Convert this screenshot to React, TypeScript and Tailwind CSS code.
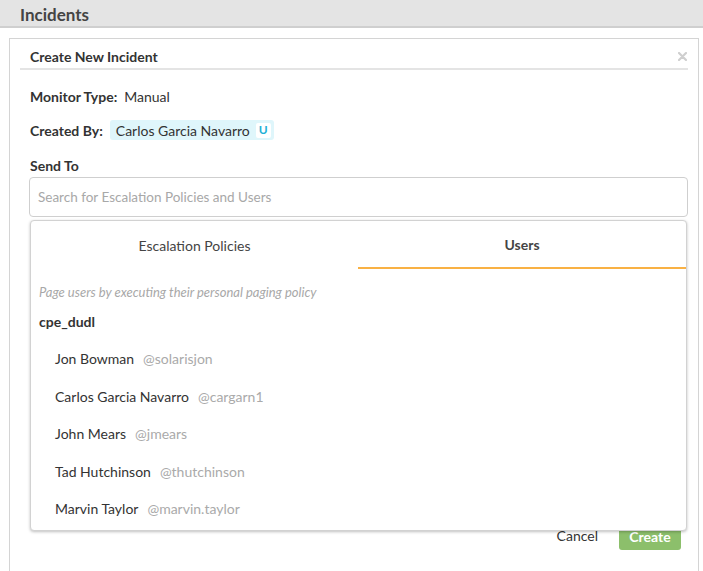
import React from "react";

const users = [
  { name: "Jon Bowman", handle: "@solarisjon" },
  { name: "Carlos Garcia Navarro", handle: "@cargarn1" },
  { name: "John Mears", handle: "@jmears" },
  { name: "Tad Hutchinson", handle: "@thutchinson" },
  { name: "Marvin Taylor", handle: "@marvin.taylor" },
];

export default function App() {
  return (
    <div
      className="w-[703px] h-[571px] overflow-hidden bg-white text-[#333]"
      style={{ fontFamily: "Lato, 'Open Sans', sans-serif" }}
    >
      <div className="h-[28px] bg-[#e4e4e4] border-b-2 border-[#cfcfcf] pl-[20px] flex items-center">
        <span className="text-[17px] font-bold text-[#444] leading-none mt-[2px]">Incidents</span>
      </div>
      <div className="ml-[9px] mr-[4px] mt-[10px] h-[560px] border border-[#d4d4d4] border-b-0 px-[10px]">
        <div className="h-[31px] border-b-2 border-[#e4e4e4] flex items-center justify-between pl-[10px] pr-[1px] pt-[5px]">
          <span className="text-[14px] font-bold text-[#333]">Create New Incident</span>
          <svg width="9" height="9" viewBox="0 0 9 9" className="mr-[0px]">
            <path d="M1 1 L8 8 M8 1 L1 8" stroke="#cfcfcf" strokeWidth="2.2" strokeLinecap="round" />
          </svg>
        </div>
        <div className="relative">
          <div className="pl-[10px] pt-[16px] flex items-center h-[20px] box-content text-[14px]">
            <span className="font-bold">Monitor Type:</span>
            <span className="ml-[7px]">Manual</span>
          </div>
          <div className="pl-[10px] mt-[14px] flex items-center h-[20px] text-[14px]">
            <span className="font-bold">Created By:</span>
            <span className="ml-[7px] h-[20px] w-[164px] bg-[#dff6fb] rounded-[3px] flex items-center pl-[6px]">
              <span>Carlos Garcia Navarro</span>
              <span className="ml-[6px] h-[15px] w-[15px] bg-white rounded-[2px] text-[12px] font-bold text-[#1eb0d6] flex items-center justify-center">U</span>
            </span>
          </div>
          <div className="pl-[10px] mt-[15px] h-[20px] flex items-center text-[14px] font-bold">Send To</div>
          <div className="mt-[2px] ml-[9px] h-[40px] border border-[#cfcfcf] rounded-[4px] flex items-center pl-[8px] text-[13.5px] text-[#a8a8a8]">
            Search for Escalation Policies and Users
          </div>
          <div className="mt-[306px] flex items-center justify-end gap-[21px] pr-[7px]">
            <span className="text-[14px] text-[#333] mt-[-2px]">Cancel</span>
            <span className="h-[27px] w-[62px] bg-[#8cbf6b] rounded-[3px] text-white text-[14px] font-bold flex items-center justify-center">Create</span>
          </div>

          <div className="absolute left-[10px] right-[1px] top-[150px] h-[311px] bg-white border border-[#d2d2d2] rounded-[4px] shadow-[0_1px_3px_rgba(0,0,0,0.25)]">
            <div className="flex h-[48px]">
              <div className="w-[327px] flex items-center justify-center text-[14px] text-[#444]">Escalation Policies</div>
              <div className="flex-1 flex items-center justify-center text-[14px] font-bold text-[#444] border-b-2 border-[#f9b144]">Users</div>
            </div>
            <div className="pl-[8px] mt-[15px] text-[13px] italic text-[#a8a8a8] leading-[16px]">
              Page users by executing their personal paging policy
            </div>
            <div className="pl-[8px] mt-[13px] text-[14px] font-bold leading-[18px]">cpe_dudl</div>
            <div className="mt-[9px]">
              {users.map((u) => (
                <div key={u.handle} className="h-[37.5px] flex items-center pl-[24px] text-[14px]">
                  <span className="text-[#333]">{u.name}</span>
                  <span className="ml-[9px] text-[#aaa]">{u.handle}</span>
                </div>
              ))}
            </div>
          </div>
        </div>
      </div>
    </div>
  );
}
